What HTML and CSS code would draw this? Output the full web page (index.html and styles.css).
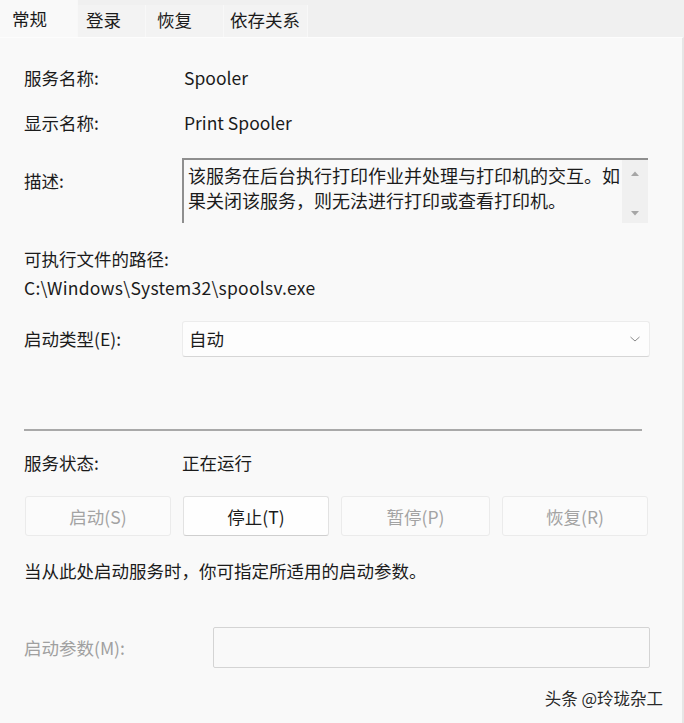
FILE: index.html
```html
<!DOCTYPE html>
<html lang="zh-CN">
<head>
    <meta charset="UTF-8">
    <title>Print Spooler 的属性</title>
    <link rel="stylesheet" href="styles.css">
</head>
<body>

    <!-- Tab strip -->
    <div class="tabs">
        <div class="tab active">常规</div>
        <div class="tab tab-login">登录</div>
        <div class="tab tab-recovery">恢复</div>
        <div class="tab tab-deps">依存关系</div>
    </div>

    <!-- General page -->
    <div class="panel">
        <div class="row first">
            <span class="label">服务名称:</span>
            <span class="value">Spooler</span>
        </div>
        <div class="row">
            <span class="label">显示名称:</span>
            <span class="value">Print Spooler</span>
        </div>
        <div class="row desc-row">
            <span class="label">描述:</span>
            <div class="desc-box">
                <div class="desc-text">该服务在后台执行打印作业并处理与打印机的交互。如果关闭该服务，则无法进行打印或查看打印机。</div>
                <div class="scrollbar">
                    <svg width="10" height="8" viewBox="0 0 10 8"><path d="M1 6 L5 1.5 L9 6 Z" fill="#a6a6a6"/></svg>
                    <svg width="10" height="8" viewBox="0 0 10 8"><path d="M1 2 L5 6.5 L9 2 Z" fill="#a6a6a6"/></svg>
                </div>
            </div>
        </div>

        <div class="path-label">可执行文件的路径:</div>
        <div class="path">C:\Windows\System32\spoolsv.exe</div>

        <div class="row type-row">
            <span class="label">启动类型(E):</span>
            <div class="select">
                <span>自动</span>
                <svg width="12" height="8" viewBox="0 0 12 8"><path d="M1.5 2 L6 6 L10.5 2" fill="none" stroke="#8a8a8a" stroke-width="1"/></svg>
            </div>
        </div>

        <hr class="divider">

        <div class="row status-row">
            <span class="label">服务状态:</span>
            <span class="status">正在运行</span>
        </div>

        <div class="buttons">
            <button class="btn" disabled>启动(S)</button>
            <button class="btn primary">停止(T)</button>
            <button class="btn" disabled>暂停(P)</button>
            <button class="btn" disabled>恢复(R)</button>
        </div>

        <p class="hint">当从此处启动服务时，你可指定所适用的启动参数。</p>

        <div class="row params-row">
            <span class="label muted">启动参数(M):</span>
            <div class="params-input"></div>
        </div>

        <div class="watermark">头条 @玲珑杂工</div>
    </div>

</body>
</html>
```

FILE: styles.css
```css
/* General */
body {
    margin: 0;
    width: 684px;
    height: 723px;
    background: #f0f0f0;
    font-family: "Noto Sans CJK SC", sans-serif;
    font-size: 17.5px;
    line-height: 24px;
    color: #1b1b1b;
    overflow: hidden;
}

/* Tabs */
.tabs {
    display: flex;
    height: 37px;
    align-items: flex-end;
    background: #f0f0f0;
}

.tab {
    box-sizing: border-box;
    height: 32px;
    line-height: 30px;
    background: #f3f3f3;
    border-right: 1px solid #f8f8f8;
}

.tab.active {
    width: 78px;
    height: 37px;
    line-height: 37px;
    padding-left: 12px;
    background: #f9f9f9;
}

.tab-login {
    width: 68px;
    padding-left: 8px;
}

.tab-recovery {
    width: 78px;
    padding-left: 11px;
}

.tab-deps {
    width: 84px;
    padding-left: 6px;
}

/* Panel */
.panel {
    position: relative;
    height: 686px;
    box-sizing: border-box;
    background: #f9f9f9;
    border-right: 2px solid #e6e6e6;
    border-top: 1px solid #fdfdfd;
    padding: 28px 0 0 24px;
}

.row {
    display: grid;
    grid-template-columns: 158px 1fr;
    align-items: center;
}

.row + .row {
    margin-top: 21px;
}

.value {
    padding-left: 2px;
}

/* Description */
.row.desc-row {
    margin-top: 23px;
    align-items: start;
}

.desc-row .label {
    margin-top: 11px;
}

.desc-box {
    display: flex;
    width: 466px;
    height: 65px;
    box-sizing: border-box;
    border-top: 2px solid #8f8f8f;
    border-left: 2px solid #8f8f8f;
    background: #f9f9f9;
}

.desc-text {
    flex: 1;
    padding: 3px 0 0 4px;
    font-size: 18px;
    line-height: 25px;
}

.scrollbar {
    width: 26px;
    background: #f0f0f0;
    display: flex;
    flex-direction: column;
    justify-content: space-between;
    align-items: center;
    padding: 10px 0 6px;
}

/* Executable path */
.path-label {
    margin-top: 24px;
}

.path {
    margin-top: 5px;
    letter-spacing: 0.25px;
}

/* Startup type */
.row.type-row {
    margin-top: 21px;
}

.select {
    display: flex;
    justify-content: space-between;
    align-items: center;
    width: 468px;
    height: 36px;
    box-sizing: border-box;
    padding: 0 8px 0 6px;
    background: #fdfdfd;
    border: 1px solid #ececec;
    border-bottom-color: #d6d6d6;
    border-radius: 3px;
}

.divider {
    width: 618px;
    margin: 72px 0 0;
    border: none;
    border-top: 2px solid #a9a9a9;
}

.row.status-row {
    margin-top: 20px;
}

/* Buttons */
.buttons {
    display: grid;
    grid-template-columns: 146px 146px 149px 146px;
    gap: 12px;
    margin: 21px 0 0 1px;
}

.btn {
    height: 40px;
    font-family: inherit;
    font-size: 17.5px;
    color: #a3a3a3;
    background: #fbfbfb;
    border: 1px solid #ebebeb;
    border-radius: 3px;
}

.btn.primary {
    color: #1b1b1b;
    background: #fefefe;
    border-color: #e2e2e2;
    border-bottom-color: #cfcfcf;
}

.hint {
    margin: 23px 0 0;
}

/* Startup parameters */
.row.params-row {
    margin-top: 44px;
    grid-template-columns: 189px 1fr;
}

.muted {
    color: #a0a0a0;
}

.params-input {
    width: 437px;
    height: 41px;
    box-sizing: border-box;
    border: 1px solid #d4d4d4;
    border-radius: 2px;
    background: #f9f9f9;
}

.watermark {
    position: absolute;
    right: 19px;
    bottom: 13px;
    font-size: 16.5px;
    color: #2a2a2a;
    text-shadow: 1px 1px 0 #ffffff;
}
```
